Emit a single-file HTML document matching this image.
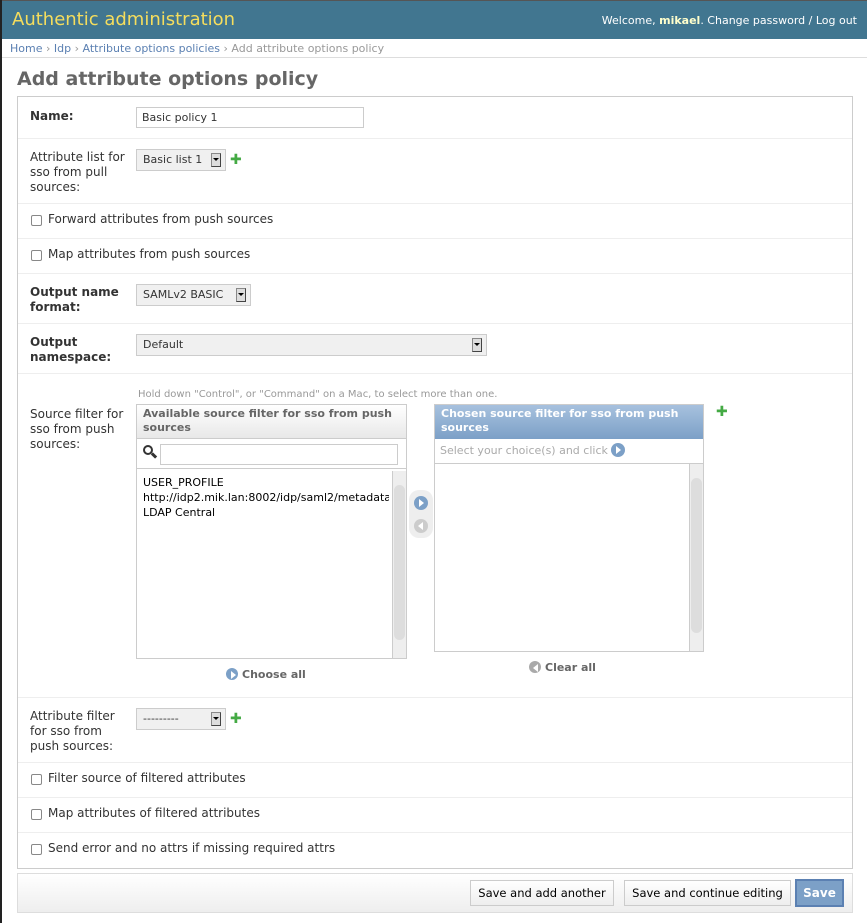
<!DOCTYPE html>
<html><head><meta charset="utf-8"><style>
*{box-sizing:border-box}
body{margin:0;width:867px;height:923px;background:#fff;font-family:"DejaVu Sans","Liberation Sans",sans-serif;font-size:12px;color:#333;position:relative;overflow:hidden}
.a{position:absolute}
.hdr{left:0;top:0;width:867px;height:39px;background:#417690;border-top:1px solid #555}
.hdr .t{position:absolute;left:12px;top:8px;font-size:18px;color:#f5dd5d}
.hdr .u{position:absolute;right:10px;top:13px;font-size:11px;color:#fff}
.bc{left:0;top:39px;width:867px;height:19px;border-bottom:1px solid #ddd;font-size:11px;color:#999;padding:3px 0 0 10px}
.bc span{color:#5b80b2}
h1{position:absolute;left:17px;top:68px;margin:0;font-size:19px;color:#666;font-weight:bold}
.box{left:17px;top:96px;width:836px;height:773px;border:1px solid #ccc}
.ln{position:absolute;left:18px;width:834px;height:1px;background:#eee}
.lb{position:absolute;left:30px;font-size:12px;color:#333;line-height:15px;white-space:nowrap}
.b{font-weight:bold;color:#333}
.inp{position:absolute;border:1px solid #ccc;background:#fff;font-size:11px;padding:3px 5px}
.sel{position:absolute;border:1px solid #ccc;background:#f0f0f0;font-size:11px;padding:3px 6px;height:22px}
.sel i{position:absolute;right:4px;top:3px;width:10px;height:14px;background:#ddd;border:1px solid #888;border-right-color:#444;border-bottom-color:#444}
.sel i:after{content:"";position:absolute;left:1px;top:4px;border:3px solid transparent;border-top:3px solid #000}
.plus{position:absolute;color:#4a4;font-weight:bold;font-size:14px;line-height:12px}
.cb{position:absolute;left:31px;width:11px;height:11px;border:1px solid #888;background:#fff;border-radius:2px}
.btn{position:absolute;top:880px;height:26px;border:1px solid #ccc;background:linear-gradient(#fff,#eee);font-size:12px;padding:5px 0;color:#000;white-space:nowrap;text-align:center}
.circ{position:absolute;width:14px;height:14px;border-radius:50%;background:#7ca0c7}
.circ.r:after{content:"";position:absolute;left:5px;top:3px;border:4px solid transparent;border-left:5px solid #fff;border-right:0}
.circ.l:after{content:"";position:absolute;left:4px;top:3px;border:4px solid transparent;border-right:5px solid #fff;border-left:0}
</style></head><body>
<div class="a hdr"><div class="t">Authentic administration</div><div class="u">Welcome, <b style="color:#ffc">mikael</b>. Change password / Log out</div></div>
<div class="a bc"><span>Home</span> › <span>Idp</span> › <span>Attribute options policies</span> › Add attribute options policy</div>
<div class="a" style="left:0;top:0;width:2px;height:923px;background:#222"></div>
<h1>Add attribute options policy</h1>
<div class="a box"></div>
<div class="ln" style="top:138px"></div><div class="ln" style="top:203px"></div><div class="ln" style="top:238px"></div><div class="ln" style="top:273px"></div><div class="ln" style="top:323px"></div><div class="ln" style="top:373px"></div><div class="ln" style="top:697px"></div><div class="ln" style="top:762px"></div><div class="ln" style="top:797px"></div><div class="ln" style="top:832px"></div>

<div class="lb b" style="top:109px">Name:</div>
<div class="inp" style="left:136px;top:107px;width:228px;height:21px">Basic policy 1</div>

<div class="lb" style="top:150px">Attribute list for<br>sso from pull<br>sources:</div>
<div class="sel" style="left:136px;top:149px;width:90px">Basic list 1<i></i></div><div class="plus" style="left:230px;top:154px">✚</div>

<div class="cb" style="top:215px"></div><div class="lb" style="left:48px;top:212px">Forward attributes from push sources</div>
<div class="cb" style="top:250px"></div><div class="lb" style="left:48px;top:247px">Map attributes from push sources</div>

<div class="lb b" style="top:285px">Output name<br>format:</div>
<div class="sel" style="left:136px;top:284px;width:115px">SAMLv2 BASIC<i></i></div>

<div class="lb b" style="top:335px">Output<br>namespace:</div>
<div class="sel" style="left:136px;top:334px;width:351px">Default<i></i></div>

<div class="lb" style="left:138px;top:387px;font-size:10px;color:#999">Hold down "Control", or "Command" on a Mac, to select more than one.</div>
<div class="lb" style="top:407px">Source filter for<br>sso from push<br>sources:</div>

<div class="a" style="left:136px;top:404px;width:271px;height:255px;border:1px solid #ccc">
 <div style="height:34px;background:linear-gradient(#fff,#e8e8e8);border-bottom:1px solid #ccc;font-weight:bold;font-size:11px;color:#666;padding:2px 6px;line-height:14px">Available source filter for sso from push sources</div>
 <div style="height:30px;border-bottom:1px solid #ccc;position:relative"><span style="position:absolute;left:6px;top:6px;width:10px;height:10px;border:2px solid #333;border-radius:50%"></span><span style="position:absolute;left:14px;top:15px;width:6px;height:3px;background:#333;transform:rotate(45deg)"></span><div style="position:absolute;left:23px;top:5px;width:238px;height:21px;border:1px solid #ccc"></div></div>
 <div style="padding:6px 6px;line-height:15px;font-size:11px;color:#000;white-space:nowrap;overflow:hidden;width:252px">USER_PROFILE<br>http://idp2.mik.lan:8002/idp/saml2/metadata<br>LDAP Central</div>
 <div style="position:absolute;right:0;top:66px;width:14px;height:187px;background:#eee;border-left:1px solid #ccc"><div style="margin:14px 1px;height:155px;background:#ddd;border-radius:6px"></div></div>
</div>
<div class="a" style="left:409px;top:490px;width:24px;height:48px;background:#eee;border-radius:10px"></div>
<div class="circ r" style="left:414px;top:496px"></div><div class="circ l" style="left:414px;top:519px;background:#ccc"></div>

<div class="a" style="left:434px;top:404px;width:270px;height:248px;border:1px solid #ccc">
 <div style="height:34px;background:linear-gradient(#a7c1de,#7ca0c7);font-weight:bold;font-size:11px;color:#fff;padding:2px 6px;line-height:14px">Chosen source filter for sso from push sources</div>
 <div style="height:25px;border-bottom:1px solid #ccc;font-size:11px;color:#aaa;padding:5px 5px;white-space:nowrap">Select your choice(s) and click <span class="circ r" style="position:relative;display:inline-block;vertical-align:middle;top:-1px"></span></div>
 <div style="position:absolute;right:0;top:59px;width:14px;height:187px;background:#eee;border-left:1px solid #ccc"><div style="margin:14px 1px;height:155px;background:#ddd;border-radius:6px"></div></div>
</div>
<div class="plus" style="left:716px;top:406px">✚</div>
<div class="circ r" style="left:226px;top:668px;width:12px;height:12px"></div><div class="lb b" style="left:242px;top:667px;font-size:11px;color:#666">Choose all</div>
<div class="circ l" style="left:529px;top:661px;width:12px;height:12px;background:#aaa"></div><div class="lb b" style="left:545px;top:660px;font-size:11px;color:#666">Clear all</div>

<div class="lb" style="top:709px">Attribute filter<br>for sso from<br>push sources:</div>
<div class="sel" style="left:136px;top:708px;width:90px">---------<i></i></div><div class="plus" style="left:230px;top:713px">✚</div>

<div class="cb" style="top:774px"></div><div class="lb" style="left:48px;top:771px">Filter source of filtered attributes</div>
<div class="cb" style="top:809px"></div><div class="lb" style="left:48px;top:806px">Map attributes of filtered attributes</div>
<div class="cb" style="top:844px"></div><div class="lb" style="left:48px;top:841px">Send error and no attrs if missing required attrs</div>

<div class="a" style="left:17px;top:873px;width:836px;height:40px;border:1px solid #ddd;background:linear-gradient(#fff,#eee)"></div>
<div class="btn" style="left:470px;width:144px;font-size:11.5px">Save and add another</div>
<div class="btn" style="left:624px;width:167px;font-size:11.5px">Save and continue editing</div>
<div class="btn" style="left:795px;width:49px;top:879px;height:28px;background:#7ca0c7;border:2px solid #5b80b2;color:#fff;font-weight:bold;padding:5px 0">Save</div>
</body></html>
